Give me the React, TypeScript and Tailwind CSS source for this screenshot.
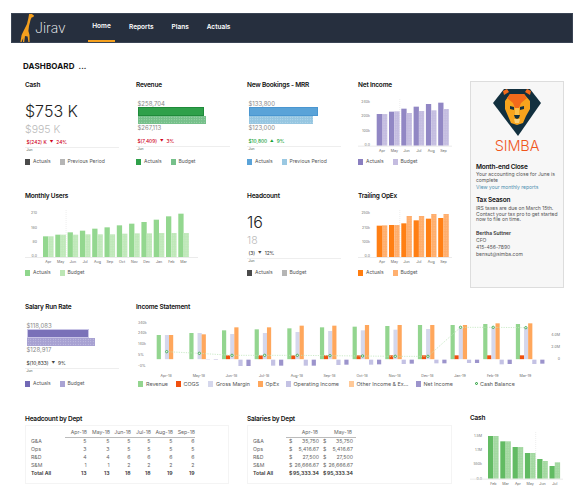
import type { ReactNode } from "react";

type LegendItem = { label: string; color: string };

const HATCH =
  "bg-[radial-gradient(rgba(255,255,255,0.45)_0.6px,transparent_0.7px)] bg-[length:2.5px_2.5px]";

function Legend({ items }: { items: LegendItem[] }) {
  return (
    <div className="flex h-[10px] items-center text-[5px] text-[#555]">
      {items.map((item) => (
        <div key={item.label} className="mr-[9px] flex items-center gap-[3px]">
          <span className="h-[6px] w-[5px]" style={{ background: item.color }} />
          <span>{item.label}</span>
        </div>
      ))}
    </div>
  );
}

function Card({ title, children, legend }: { title: string; children: ReactNode; legend?: LegendItem[] }) {
  return (
    <div className="flex h-[111px] flex-col">
      <div className="flex h-[10px] items-center text-[6.5px] font-semibold tracking-[-0.2px] text-[#111]">{title}</div>
      <div className="relative h-[66px]">{children}</div>
      {legend && <Legend items={legend} />}
    </div>
  );
}

type BarChartProps = {
  width: number;
  zo: number;
  x0: number;
  actuals: number[];
  budgets: number[];
  months: string[];
  yLabels: [string, number][];
  colors: [string, string];
  dashAt: number;
  baseZ: number;
  labelZ: number;
  id: string;
};

function BarChart({ width, zo, x0, actuals, budgets, months, yLabels, colors, dashAt, baseZ, labelZ, id }: BarChartProps) {
  const pitch = 12.3;
  const base = baseZ / 3 - zo;
  return (
    <svg width={width} height={66} className="block">
      <defs>
        <pattern id={id} width="2.5" height="2.5" patternUnits="userSpaceOnUse">
          <circle cx="1" cy="1" r="0.5" fill="#fff" opacity="0.3" />
        </pattern>
      </defs>
      {yLabels.map(([label, z]) => (
        <text key={label} x={12} y={z / 3 - zo + 1.5} textAnchor="end" fontSize="3.6" fill="#777">
          {label}
        </text>
      ))}
      <line x1={x0 + dashAt * pitch - 1.5} x2={x0 + dashAt * pitch - 1.5} y1={8} y2={base} stroke="#ddd" strokeWidth="0.5" strokeDasharray="1 1" />
      {actuals.map((top, i) => {
        const x = x0 + i * pitch;
        const at = top / 3 - zo;
        const bt = budgets[i] / 3 - zo;
        return (
          <g key={months[i]}>
            <rect x={x} y={at} width={5.3} height={base - at} fill={colors[0]} />
            <rect x={x + 5.3} y={bt} width={5.3} height={base - bt} fill={colors[1]} />
            <rect x={x + 5.3} y={bt} width={5.3} height={base - bt} fill={`url(#${id})`} />
            <text x={x + 5.3} y={labelZ / 3 - zo + 1.5} textAnchor="middle" fontSize="3.6" fill="#666">
              {months[i]}
            </text>
          </g>
        );
      })}
      <line x1={0} x2={width} y1={base + 0.5} y2={base + 0.5} stroke="#e6e6e6" strokeWidth="0.8" />
    </svg>
  );
}

function Bullet({ top, bottom, topW, bottomW, colors, variance, varianceClass, arrow }: {
  top: string;
  bottom: string;
  topW: number;
  bottomW: number;
  colors: [string, string, string];
  variance: string;
  varianceClass: string;
  arrow: string;
}) {
  return (
    <div className="pt-[9px]">
      <div className="ml-[1.5px] h-[7px] text-[6px] leading-[7px] text-[#888]">{top}</div>
      <div className="ml-[1.5px] h-[9px] border" style={{ width: topW, background: colors[0], borderColor: colors[2] }} />
      <div className={`ml-[1.5px] h-[8px] ${HATCH}`} style={{ width: bottomW, backgroundColor: colors[1] }} />
      <div className="ml-[1.5px] h-[7px] text-[6px] leading-[7px] text-[#888]">{bottom}</div>
      <Variance text={variance} className={varianceClass} arrow={arrow} mt="mt-[8px]" />
    </div>
  );
}

function Variance({ text, className, arrow, mt }: { text: string; className: string; arrow: string; mt: string }) {
  return (
    <>
      <div className={`${mt} ml-[1.5px] flex h-[6px] items-center gap-[3px] text-[4.8px] font-medium ${className}`}>
        <span>{text.split("|")[0]}</span>
        <span className="text-[3.5px]">{arrow}</span>
        <span>{text.split("|")[1]}</span>
      </div>
      <div className="mt-[1px] h-px w-[94px] bg-[#eee]" />
      <div className="ml-[1.5px] h-[5px] text-[3.4px] leading-[5px] text-[#555]">Jun</div>
    </>
  );
}

function BigNumber({ main, sub, variance, className, arrow }: {
  main: string;
  sub: string;
  variance: string;
  className: string;
  arrow: string;
}) {
  return (
    <div className="pt-[11px]">
      <div className="text-[16px] font-light leading-[18px] text-[#222]">{main}</div>
      <div className="mt-[4px] text-[10.5px] font-light leading-[12px] text-[#bbb]">{sub}</div>
      <Variance text={variance} className={className} arrow={arrow} mt="mt-[4px]" />
    </div>
  );
}

const inc = [
  { rev: 120, cogs: 0, gm: 120, op: 120, oi: 194, ni: 194 },
  { rev: 114, cogs: 0, gm: 114, op: 118, oi: 195, ni: 195 },
  { rev: 106, cogs: 181, gm: 117, op: 97, oi: 213, ni: 213 },
  { rev: 103, cogs: 181, gm: 114, op: 97, oi: 212, ni: 212 },
  { rev: 100, cogs: 181, gm: 111, op: 92, oi: 212, ni: 212 },
  { rev: 97, cogs: 181, gm: 108, op: 92, oi: 210, ni: 209 },
  { rev: 95, cogs: 181, gm: 106, op: 90, oi: 209, ni: 208 },
  { rev: 93, cogs: 181, gm: 104, op: 90, oi: 207, ni: 206 },
  { rev: 90, cogs: 181, gm: 102, op: 90, oi: 205, ni: 205 },
  { rev: 90, cogs: 181, gm: 100, op: 90, oi: 204, ni: 204 },
  { rev: 87, cogs: 181, gm: 98, op: 85, oi: 208, ni: 207 },
  { rev: 87, cogs: 181, gm: 98, op: 85, oi: 207, ni: 206 },
];
const incMonths = ["Apr-18", "May-18", "Jun-18", "Jul-18", "Aug-18", "Sep-18", "Oct-18", "Nov-18", "Dec-18", "Jan-19", "Feb-19", "Mar-19"];
const cashZ = [170, 175, 181, 181, 181, 182, 183, 184, 184, 97, 97, 98];

function IncomeChart() {
  const y = (z: number) => z / 3 - 18;
  const X0 = 20.7;
  const P = 32.65;
  const base = y(192.5);
  const points = cashZ.map((z, i) => `${X0 + i * P + 10},${y(z)}`).join(" ");
  return (
    <svg width={430} height={66} className="block">
      {([["340k", 82], ["240k", 113], ["140k", 146], ["5%", 178], ["-0%", 211]] as [string, number][]).map(([t, z]) => (
        <text key={t} x={2} y={y(z) + 1.5} fontSize="3.6" fill="#777">
          {t}
        </text>
      ))}
      {([["4.0M", 118], ["2.0M", 154], ["0", 189]] as [string, number][]).map(([t, z]) => (
        <text key={t} x={424} y={y(z) + 1.5} textAnchor="end" fontSize="3.6" fill="#777">
          {t}
        </text>
      ))}
      {inc.map((g, i) => {
        const x = X0 + i * P;
        return (
          <g key={incMonths[i]}>
            <rect x={x} y={y(g.rev)} width={4.2} height={base - y(g.rev)} fill="#93d58f" />
            {g.cogs > 0 && <rect x={x + 4} y={y(g.cogs)} width={4.2} height={base - y(g.cogs)} fill="#f0500f" />}
            <rect x={x + 8.2} y={y(g.gm)} width={4.2} height={base - y(g.gm)} fill="#d5d7ec" />
            <rect x={x + 12.3} y={y(g.op)} width={4.2} height={base - y(g.op)} fill="#ffa75c" />
            <rect x={x + 16.4} y={base + 0.5} width={4.2} height={y(g.oi) - base - 0.5} fill="#c4c2e4" />
            <rect x={x + 24.4} y={base + 0.5} width={4.2} height={y(g.ni) - base - 0.5} fill="#9c94cc" />
            <text x={x + 9.5} y={y(240) + 1.5} textAnchor="middle" fontSize="3.6" fill="#666">
              {incMonths[i]}
            </text>
          </g>
        );
      })}
      <polyline points={points} fill="none" stroke="#bfe6bb" strokeWidth="0.8" strokeDasharray="1.2 1.2" />
      {cashZ.map((z, i) => (
        <circle key={i} cx={X0 + i * P + 10} cy={y(z)} r="1.2" fill="#e8f7e6" stroke="#1f9a35" strokeWidth="0.7" />
      ))}
    </svg>
  );
}

const incomeLegend: { label: string; color: string; w: string }[] = [
  { label: "Revenue", color: "#93d58f", w: "w-[37.5px]" },
  { label: "COGS", color: "#f0500f", w: "w-[32.5px]" },
  { label: "Gross Margin", color: "#d5d7ec", w: "w-[49.5px]" },
  { label: "OpEx", color: "#ffa75c", w: "w-[28px]" },
  { label: "Operating Income", color: "#c4c2e4", w: "w-[63px]" },
  { label: "Other Income & Ex...", color: "#ffc998", w: "w-[67px]" },
  { label: "Net Income", color: "#9c94cc", w: "w-[59px]" },
];

function IncomeLegend() {
  return (
    <div className="flex h-[10px] items-center pl-[2px] text-[5.4px] text-[#555]">
      {incomeLegend.map((item) => (
        <div key={item.label} className={`flex items-center gap-[3px] ${item.w}`}>
          <span className="h-[6px] w-[5px]" style={{ background: item.color }} />
          <span className="whitespace-nowrap">{item.label}</span>
        </div>
      ))}
      <div className="flex items-center gap-[2.5px]">
        <span className="h-[3px] w-[3px] rounded-full border-[0.7px] border-[#1f9a35] bg-[#e8f7e6]" />
        <span className="whitespace-nowrap">Cash Balance</span>
      </div>
    </div>
  );
}

function HeadcountTable() {
  const rows: [string, number[]][] = [
    ["G&A", [5, 5, 5, 5, 5, 6]],
    ["Ops", [3, 3, 5, 5, 5, 5]],
    ["R&D", [4, 4, 6, 6, 6, 6]],
    ["S&M", [1, 1, 2, 2, 2, 2]],
    ["Total All", [13, 13, 18, 18, 19, 19]],
  ];
  const heads = ["Apr-18", "May-18", "Jun-18", "Jul-18", "Aug-18", "Sep-18"];
  const widths = ["w-[22px]", "w-[23px]", "w-[21px]", "w-[20px]", "w-[22px]", "w-[22px]"];
  return (
    <div className="h-[59px] w-[204px] border border-[#f4f4f4] pl-[5px] pt-[3px] text-[5.2px] text-[#666]">
      <div className="flex h-[8px] items-center">
        <span className="w-[34px]" />
        {heads.map((h, i) => (
          <span key={h} className={`${widths[i]} text-right`}>
            {h}
          </span>
        ))}
      </div>
      <div className="ml-[34px] h-[1px] w-[130px] bg-[#bbb]" />
      {rows.map(([name, vals]) => (
        <div key={name} className={`flex h-[8px] items-center ${name === "Total All" ? "font-semibold text-[#333]" : ""}`}>
          <span className="w-[34px]">{name}</span>
          {vals.map((v, i) => (
            <span key={i} className={`${widths[i]} pr-[0.5px] text-right`}>
              {v}
            </span>
          ))}
        </div>
      ))}
    </div>
  );
}

function SalariesTable() {
  const rows: [string, string][] = [
    ["G&A", "35,750"],
    ["Ops", "5,416.67"],
    ["R&D", "27,500"],
    ["S&M", "26,666.67"],
    ["Total All", "95,333.34"],
  ];
  return (
    <div className="h-[59px] w-[205px] border border-[#f4f4f4] pl-[5px] pt-[3px] text-[5.2px] text-[#666]">
      <div className="flex h-[8px] items-center">
        <span className="w-[36px]" />
        <span className="w-[29px] text-right">Apr-18</span>
        <span className="w-[34px] text-right">May-18</span>
      </div>
      <div className="ml-[33px] h-[1px] w-[70px] bg-[#bbb]" />
      {rows.map(([name, v]) => (
        <div key={name} className={`flex h-[8px] items-center ${name === "Total All" ? "font-semibold text-[#333]" : ""}`}>
          <span className="w-[36px]">{name}</span>
          <span className="flex w-[30px] justify-between">
            <span>$</span>
            <span>{v}</span>
          </span>
          <span className="ml-[4px] flex w-[30px] justify-between">
            <span>$</span>
            <span>{v}</span>
          </span>
        </div>
      ))}
    </div>
  );
}

function Giraffe() {
  return (
    <svg width={14} height={30} viewBox="0 0 14 30" className="ml-[8px] block">
      <path
        fill="#f5a01e"
        d="M9 2.5 L10 0.8 L10.8 2.2 L12 0.8 L12.4 2.6 L14 3.6 L13.4 5 L11.6 5.4 L10.5 8 L9 14 L8.4 19 L9.5 23 L9.6 30 L8.4 30 L7.6 24.5 L5 24 L4.2 30 L3 30 L3.2 26 L1.6 30 L0.4 30 L1.6 23 L4 18 L7 12 L8.4 6 Z"
      />
    </svg>
  );
}

function SimbaLogo() {
  return (
    <svg width={50} height={49} viewBox="0 0 50 49" className="block">
      <polygon points="12,1 38,1 49,15 26,48 1,15" fill="#12303f" />
      <polygon points="11,3 15,1 17,4 12,7" fill="#f26a1b" />
      <polygon points="39,3 35,1 33,4 38,7" fill="#f26a1b" />
      <polygon points="18,6 32,6 38,13 38,21 34,28 31,35 25,37 19,35 16,28 13,21 13,13" fill="#f7a41d" />
      <polygon points="18,6 32,6 35,10 29,15 27,20 23,20 21,15 15,10" fill="#f26a1b" />
      <polygon points="18,18 22,19 22,22 18,21" fill="#12303f" />
      <polygon points="32,18 28,19 28,22 32,21" fill="#12303f" />
      <polygon points="23,20 27,20 27,27 23,27" fill="#fbc04a" />
      <polygon points="22,27 28,27 27,30 25,31 23,30" fill="#12303f" />
      <polygon points="22,31 28,31 27,35 23,35" fill="#fbd27a" />
    </svg>
  );
}

function Sidebar() {
  return (
    <div className="ml-[1px] h-[207px] w-[94px] border border-[#ddd] bg-[#f7f7f7] text-[5px] leading-[7px] text-[#555]">
      <div className="flex flex-col items-center pt-[6px]">
        <SimbaLogo />
        <div className="mt-[1px] text-[14.5px] font-light leading-[15px] tracking-[-0.1px] text-[#f0561c]">SIMBA</div>
      </div>
      <div className="px-[5px] pt-[10px]">
        <div className="h-[9px] text-[6.5px] font-semibold leading-[9px] tracking-[-0.2px] text-[#111]">Month-end Close</div>
        <div className="leading-[5.5px]">Your accounting close for June is complete</div>
        <div className="mt-[1px] text-[#4d8fb0]">View your monthly reports</div>
        <div className="mt-[5px] h-[9px] text-[6.5px] font-semibold leading-[9px] tracking-[-0.2px] text-[#111]">Tax Season</div>
        <div className="mt-[1px] leading-[5.5px]">IRS taxes are due on March 15th. Contact your tax pro to get started now to file on time.</div>
        <div className="mt-[7px] font-semibold text-[#333]">Bertha Suttner</div>
        <div>CFO</div>
        <div>415-456-7890</div>
        <div>bensut@simba.com</div>
      </div>
    </div>
  );
}

const sixMonths = ["Apr", "May", "Jun", "Jul", "Aug", "Sep"];
const twelveMonths = ["Apr", "May", "Jun", "Jul", "Aug", "Sep", "Oct", "Nov", "Dec", "Jan", "Feb", "Mar"];

const greyLegend = [
  { label: "Actuals", color: "#4a4a4a" },
  { label: "Previous Period", color: "#b5b5b5" },
];

export default function App() {
  return (
    <div className="h-[498px] w-[577px] overflow-hidden bg-white font-[Inter,sans-serif]">
      <header className="ml-[11px] mt-[13px] flex h-[30px] w-[562px] items-stretch border border-[#3a4454] bg-[#262f3e]">
        <div className="flex w-[76px] items-end overflow-hidden">
          <Giraffe />
          <span className="mb-[5px] ml-[1px] text-[14px] font-extralight leading-[18px] text-white">Jirav</span>
        </div>
        <nav className="flex text-[6.5px] font-semibold text-white">
          <a className="flex w-[27px] items-center justify-center border-b-2 border-[#f5a01e]">Home</a>
          <a className="ml-[14px] flex items-center">Reports</a>
          <a className="ml-[18px] flex items-center">Plans</a>
          <a className="ml-[18px] flex items-center">Actuals</a>
        </nav>
      </header>

      <main className="pl-[25px]">
        <div className="ml-[-2px] mt-[18px] flex h-[9px] items-center gap-[4px] text-[8px] font-bold tracking-[0.1px] text-[#111]">
          DASHBOARD <span className="font-semibold text-[#333]">...</span>
        </div>

        <div className="mt-[11px] flex">
          <div className="grid w-[444px] grid-cols-[111px_111px_111px_111px] auto-rows-[111px]">
            <Card title="Cash" legend={greyLegend}>
              <BigNumber main="$753 K" sub="$995 K" variance="$(242) K|24%" className="text-[#d0021b]" arrow="▼" />
            </Card>
            <Card title="Revenue" legend={[{ label: "Actuals", color: "#2fa04a" }, { label: "Budget", color: "#76c08a" }]}>
              <Bullet
                top="$258,704"
                bottom="$267,113"
                topW={66}
                bottomW={68}
                colors={["#2fa04a", "#76c08a", "#1f8a3a"]}
                variance="$(7,409)|3%"
                varianceClass="text-[#d0021b]"
                arrow="▼"
              />
            </Card>
            <Card title="New Bookings - MRR" legend={[{ label: "Actuals", color: "#5aa3d8" }, { label: "Previous Period", color: "#9ac8e2" }]}>
              <Bullet
                top="$133,800"
                bottom="$123,000"
                topW={69}
                bottomW={64}
                colors={["#5aa3d8", "#96c6e1", "#4a96d0"]}
                variance="$10,800|9%"
                varianceClass="text-[#18a33a]"
                arrow="▲"
              />
            </Card>
            <Card title="Net Income" legend={[{ label: "Actuals", color: "#8a7fc0" }, { label: "Budget", color: "#c4bce0" }]}>
              <BarChart
                id="ni"
                width={94}
                zo={91}
                x0={18.7}
                actuals={[342, 335, 326, 320, 312, 308]}
                budgets={[342, 334, 339, 333, 331, 327]}
                months={sixMonths}
                yLabels={[["240k", 304], ["200k", 347], ["100k", 391], ["0.0", 433]]}
                colors={["#9187c4", "#c3bce0"]}
                dashAt={2}
                baseZ={437}
                labelZ={451}
              />
            </Card>

            <div className="col-span-2">
              <Card title="Monthly Users" legend={[{ label: "Actuals", color: "#8fd68c" }, { label: "Budget", color: "#bce6b5" }]}>
                <BarChart
                  id="mu"
                  width={173}
                  zo={22}
                  x0={18}
                  actuals={[169, 164, 157, 152, 146, 142, 136, 131, 126, 119, 109, 101]}
                  budgets={[169, 164, 164, 163, 163, 163, 161, 160, 160, 159, 159, 159]}
                  months={twelveMonths}
                  yLabels={[["210", 98], ["160", 141], ["80", 184], ["0.0", 227]]}
                  colors={["#93d78f", "#bfe8b9"]}
                  dashAt={2}
                  baseZ={231}
                  labelZ={245}
                />
              </Card>
            </div>
            <Card title="Headcount" legend={[{ label: "Actuals", color: "#4a4a4a" }, { label: "Budget", color: "#b5b5b5" }]}>
              <BigNumber main="16" sub="18" variance="(3)|12%" className="text-[#444]" arrow="▼" />
            </Card>
            <Card title="Trailing OpEx" legend={[{ label: "Actuals", color: "#ff7d10" }, { label: "Budget", color: "#ffb070" }]}>
              <BarChart
                id="ox"
                width={94}
                zo={22}
                x0={18.7}
                actuals={[137, 135, 130, 121, 116, 114]}
                budgets={[136, 135, 108, 108, 102, 102]}
                months={sixMonths}
                yLabels={[["250k", 98], ["210k", 141], ["100k", 184], ["0.0", 227]]}
                colors={["#ff7f14", "#ffad6b"]}
                dashAt={2}
                baseZ={231}
                labelZ={245}
              />
            </Card>
          </div>
          <Sidebar />
        </div>

        <div className="flex">
          <div className="w-[111px]">
            <Card title="Salary Run Rate" legend={[{ label: "Actuals", color: "#7168b5" }, { label: "Budget", color: "#a9a3d3" }]}>
              <Bullet
                top="$118,083"
                bottom="$128,917"
                topW={62}
                bottomW={68}
                colors={["#7a71b8", "#a7a1d2", "#c9c5e6"]}
                variance="$(10,833)|9%"
                varianceClass="text-[#444]"
                arrow="▼"
              />
            </Card>
          </div>
          <div className="w-[430px]">
            <div className="flex h-[111px] flex-col">
              <div className="flex h-[10px] items-center text-[6.5px] font-semibold tracking-[-0.2px] text-[#111]">Income Statement</div>
              <div className="h-[66px]">
                <IncomeChart />
              </div>
              <IncomeLegend />
            </div>
          </div>
        </div>

        <div className="flex">
          <div className="w-[222px]">
            <div className="flex h-[11px] items-center text-[6.5px] font-semibold tracking-[-0.2px] text-[#111]">Headcount by Dept</div>
            <HeadcountTable />
          </div>
          <div className="w-[223px]">
            <div className="flex h-[11px] items-center text-[6.5px] font-semibold tracking-[-0.2px] text-[#111]">Salaries by Dept</div>
            <SalariesTable />
          </div>
          <div className="w-[93px]">
            <div className="flex h-[10px] items-center text-[6.5px] font-semibold tracking-[-0.2px] text-[#111]">Cash</div>
            <BarChart
              id="ca"
              width={93}
              zo={19}
              x0={18}
              actuals={[93, 109, 126, 144, 162, 183]}
              budgets={[93, 109, 126, 144, 168, 172]}
              months={["Feb", "Mar", "Apr", "May", "Jun", "Jul"]}
              yLabels={[["1.5M", 90], ["1.1M", 133], ["550k", 176], ["0.0", 219]]}
              colors={["#62bb63", "#a2d8a0"]}
              dashAt={4}
              baseZ={221}
              labelZ={236}
            />
          </div>
        </div>
      </main>
    </div>
  );
}
